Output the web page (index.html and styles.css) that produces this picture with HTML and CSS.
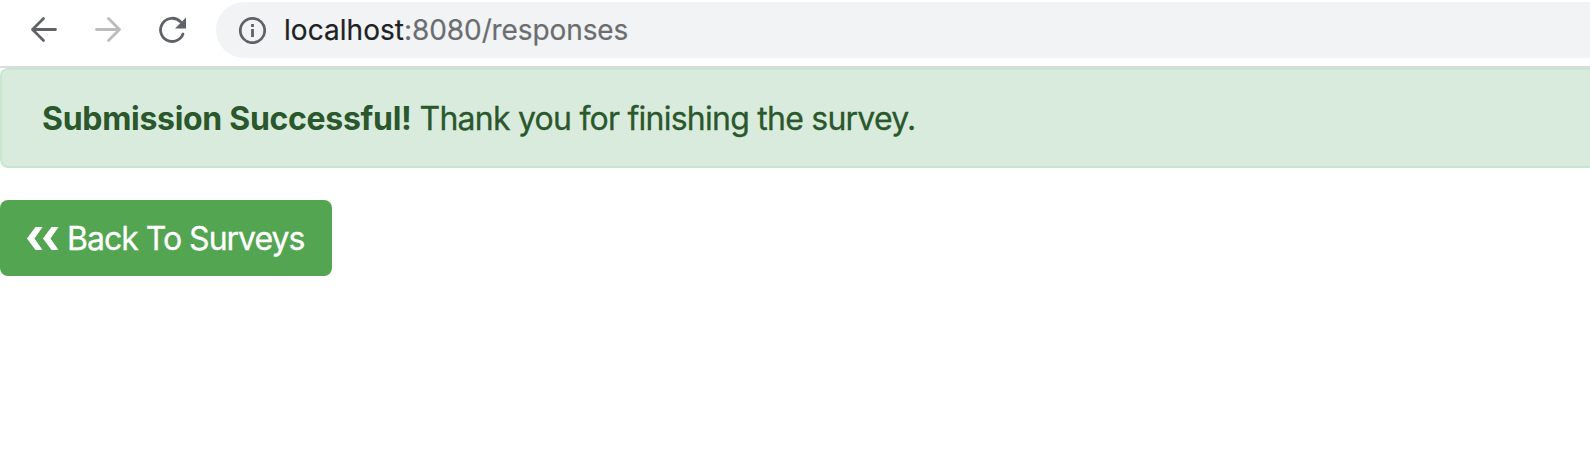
FILE: index.html
```html
<!DOCTYPE html>
<html lang="en">
<head>
<meta charset="utf-8">
<title>Responses</title>
<link rel="stylesheet" href="styles.css">
</head>
<body>
<header class="toolbar">
  <nav class="nav">
    <svg class="icon" viewBox="0 0 32 32"><path d="M27.500 15.500H4.500M15.500 4.500L4.500 15.500L15.500 26.500"/></svg>
    <svg class="icon icon-disabled" viewBox="0 0 32 32"><path d="M4.500 15.500H27.500M16.500 4.500L27.500 15.500L16.500 26.500"/></svg>
    <svg class="icon" viewBox="0 0 32 32"><path d="M27 20A11.600 11.600 0 1 1 24.500 7.800"/><path class="solid" d="M30 3.500V14.500H19Z"/></svg>
  </nav>
  <div class="address">
    <svg class="info" viewBox="0 0 28 28"><circle cx="14.500" cy="14.500" r="12.200"/><path d="M14.500 13V21M14.500 8V11"/></svg>
    <span class="url"><span class="host">localhost</span><span class="path">:8080/responses</span></span>
  </div>
</header>
<main>
  <div class="alert"><strong class="alert-title">Submission Successful!</strong><span class="alert-text">Thank you for finishing the survey.</span></div>
  <a class="button"><svg class="chevrons" viewBox="0 0 32 24"><path d="M8.500 0H15.500L7.500 11.500L15.500 23H8.500L0 11.500ZM24.500 0H31.500L23.500 11.500L31.500 23H24.500L16 11.500Z"/></svg><span class="button-text">Back To Surveys</span></a>
</main>
</body>
</html>
```
FILE: styles.css
```css
* { box-sizing: border-box; }
body { margin: 0; background: #fff; font-family: Inter, "Liberation Sans", sans-serif; overflow: hidden; }
.toolbar { display: flex; height: 68px; padding: 2px 0 8px; border-bottom: 2px solid #dadae0; }
.nav { display: flex; gap: 32px; width: 216px; padding: 12px 0 0 28px; flex: none; }
.icon { width: 32px; height: 32px; fill: none; stroke: #5f6368; stroke-width: 2.800; stroke-linecap: round; stroke-linejoin: round; }
.icon-disabled { stroke: #babcbe; }
.icon .solid { fill: #5f6368; stroke: none; }
.address { display: flex; align-items: center; flex: 1; height: 56px; padding-left: 22px; border-radius: 28px 0 0 28px; background: #f1f3f4; }
.info { width: 28px; height: 28px; fill: none; stroke: #5f6368; stroke-width: 2.800; }
.url { margin-left: 18px; font-size: 28px; line-height: 40px; white-space: nowrap; -webkit-text-stroke: 0.200px; }
.host { color: #202124; letter-spacing: 0.050px; }
.path { color: #6b6d70; letter-spacing: -0.100px; }
.alert { height: 100px; padding: 25px 40px 23px; border: 2px solid #c9e6cf; border-right: 0; border-radius: 8px 0 0 8px; background: #d9ebdc; color: #2a572c; font-size: 32px; line-height: 48px; white-space: nowrap; }
.alert-title { font-weight: 700; letter-spacing: -0.300px; }
.alert-text { margin-left: 8px; letter-spacing: -0.760px; -webkit-text-stroke: 0.300px; }
.button { display: flex; align-items: center; width: 332px; height: 76px; margin-top: 32px; padding: 2px 0 0 26.500px; border-radius: 8px; background: #54a551; color: #fff; font-size: 32px; line-height: 48px; white-space: nowrap; }
.chevrons { width: 32px; height: 24px; fill: #fff; }
.button-text { margin-left: 8.500px; letter-spacing: -1px; -webkit-text-stroke: 0.300px; }
```
